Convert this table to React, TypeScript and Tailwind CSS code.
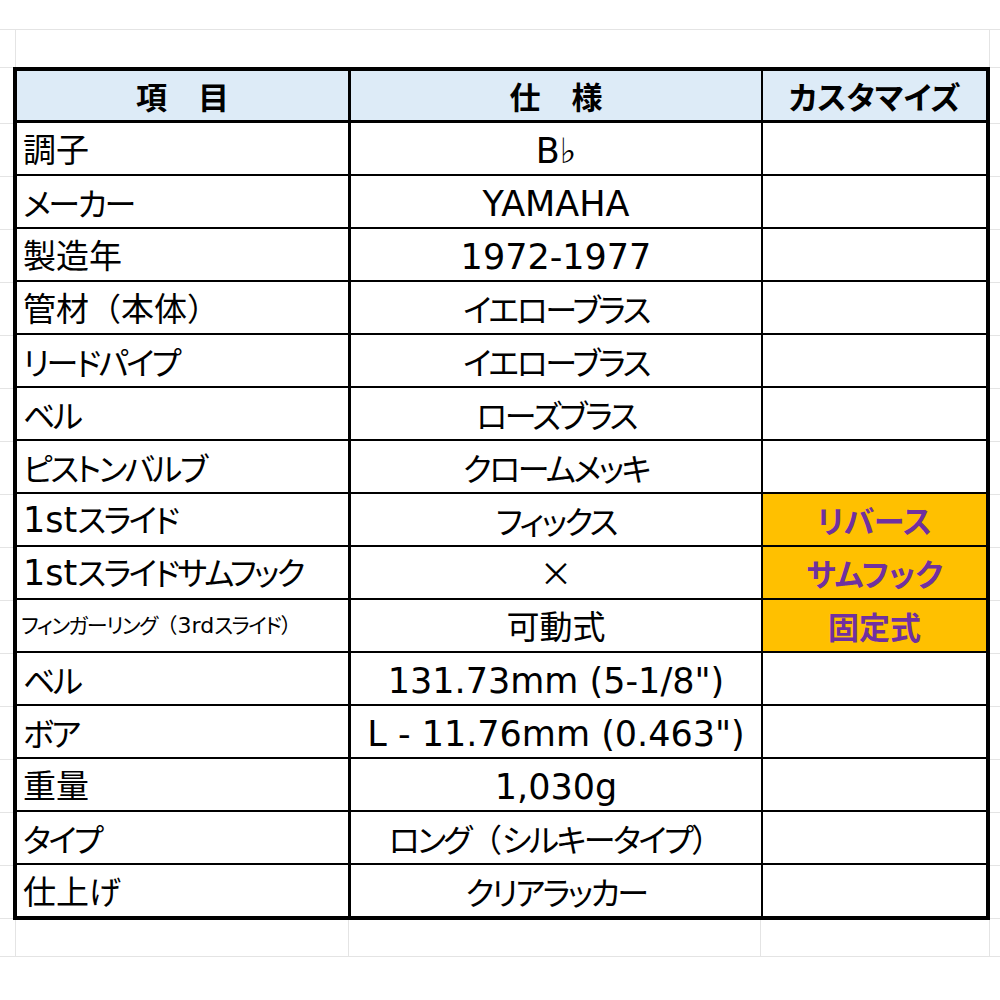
const rows: { item: string; spec: string; custom?: string; small?: boolean }[] = [
  { item: '調子', spec: 'B♭' },
  { item: 'メーカー', spec: 'YAMAHA' },
  { item: '製造年', spec: '1972-1977' },
  { item: '管材（本体）', spec: 'イエローブラス' },
  { item: 'リードパイプ', spec: 'イエローブラス' },
  { item: 'ベル', spec: 'ローズブラス' },
  { item: 'ピストンバルブ', spec: 'クロームメッキ' },
  { item: '1stスライド', spec: 'フィックス', custom: 'リバース' },
  { item: '1stスライドサムフック', spec: '×', custom: 'サムフック' },
  { item: 'フィンガーリング（3rdスライド）', spec: '可動式', custom: '固定式', small: true },
  { item: 'ベル', spec: '131.73mm (5-1/8")' },
  { item: 'ボア', spec: 'L - 11.76mm (0.463")' },
  { item: '重量', spec: '1,030g' },
  { item: 'タイプ', spec: 'ロング（シルキータイプ）' },
  { item: '仕上げ', spec: 'クリアラッカー' },
]

type RunKind = 'latin' | 'kana' | 'paren' | 'kanji'

function kindOf(ch: string): RunKind {
  if (/[\u3040-\u30ff]/.test(ch)) return 'kana'
  if (/[\uff08\uff09]/.test(ch)) return 'paren'
  if (/[\u4e00-\u9fff\u00d7]/.test(ch)) return 'kanji'
  return 'latin'
}

// the sheet font has wide latin and narrow kana, so each run gets its own size
const runClass: Record<'lg' | 'sm', Record<RunKind, string>> = {
  lg: {
    latin: "font-['DejaVu_Sans',sans-serif] text-[35px]",
    kana: "text-[32px] tracking-[-2.5px] [font-feature-settings:'palt']",
    paren: 'text-[32px]',
    kanji: 'text-[33px]',
  },
  sm: {
    latin: "font-['DejaVu_Sans',sans-serif] text-[22px]",
    kana: "text-[21px] tracking-[-1.5px] [font-feature-settings:'palt']",
    paren: 'text-[21px]',
    kanji: 'text-[22px]',
  },
}

function Text({ value, size }: { value: string; size: 'lg' | 'sm' }) {
  const runs: { kind: RunKind; text: string }[] = []
  for (const ch of value) {
    const k = kindOf(ch)
    const last = runs[runs.length - 1]
    if (last && last.kind === k) last.text += ch
    else runs.push({ kind: k, text: ch })
  }
  return (
    <span className="whitespace-pre">
      {runs.map((r, i) => (
        <span key={i} className={runClass[size][r.kind]}>
          {r.text}
        </span>
      ))}
    </span>
  )
}

// faint spreadsheet gridline column beside the table
function Margin({ className }: { className: string }) {
  return (
    <div className={`flex flex-col ${className}`}>
      <div className="h-[56px] border-t border-[#e4e4e4]" />
      {rows.map((_, i) => (
        <div key={i} className="h-[53px] border-t border-[#e4e4e4]" />
      ))}
      <div className="border-t border-[#e4e4e4]" />
    </div>
  )
}

const isLatin = (s: string) => /^[\x20-\x7e\u266d]+$/.test(s)

export default function App() {
  return (
    <div className="w-[1000px] h-[1000px] bg-white overflow-hidden text-black font-['Noto_Sans_CJK_JP',sans-serif]">
      <div className="h-[29px]" />

      {/* empty sheet row above */}
      <div className="h-[38px] border-t border-[#e4e4e4] flex">
        <div className="w-[16px] border-r border-[#e4e4e4]" />
        <div className="w-[974px] border-r border-[#e4e4e4]" />
      </div>

      <div className="flex">
        <Margin className="w-[13px]" />

        {/* Spec table */}
        <div className="w-[977px] border-4 border-black">
          <div className="grid grid-cols-[334px_412px_1fr] h-[52px] bg-[#ddebf7] border-b-[3px] border-black font-bold text-[31px] leading-none [font-feature-settings:'palt']">
            <div className="flex items-center justify-center border-r-[3px] border-black">項　目</div>
            <div className="flex items-center justify-center border-r-2 border-black">仕　様</div>
            <div className="flex items-center justify-center">カスタマイズ</div>
          </div>

          {rows.map((r, i) => (
            <div
              key={i}
              className={`grid grid-cols-[334px_412px_1fr] leading-none ${i < rows.length - 1 ? 'h-[53px] border-b-2 border-black' : 'h-[51px]'}`}
            >
              <div className={`flex items-center border-r-[3px] border-black ${r.small ? 'pl-[4px]' : 'pl-[6px]'}`}>
                <Text value={r.item} size={r.small ? 'sm' : 'lg'} />
              </div>
              <div className={`flex items-center justify-center border-r-2 border-black ${isLatin(r.spec) ? 'pt-[6px]' : ''}`}>
                <Text value={r.spec} size="lg" />
              </div>
              <div
                className={`flex items-center justify-center ${r.custom ? "bg-[#ffc000] text-[#7030a0] font-bold text-[31px] [font-feature-settings:'palt']" : ''}`}
              >
                {r.custom}
              </div>
            </div>
          ))}
        </div>

        <Margin className="flex-1" />
      </div>

      {/* empty sheet row below */}
      <div className="h-[37px] border-b border-[#e4e4e4] flex">
        <div className="w-[16px] border-r border-[#e4e4e4]" />
        <div className="w-[333px] border-r border-[#e4e4e4]" />
        <div className="w-[412px] border-r border-[#e4e4e4]" />
        <div className="w-[229px] border-r border-[#e4e4e4]" />
      </div>
    </div>
  )
}
